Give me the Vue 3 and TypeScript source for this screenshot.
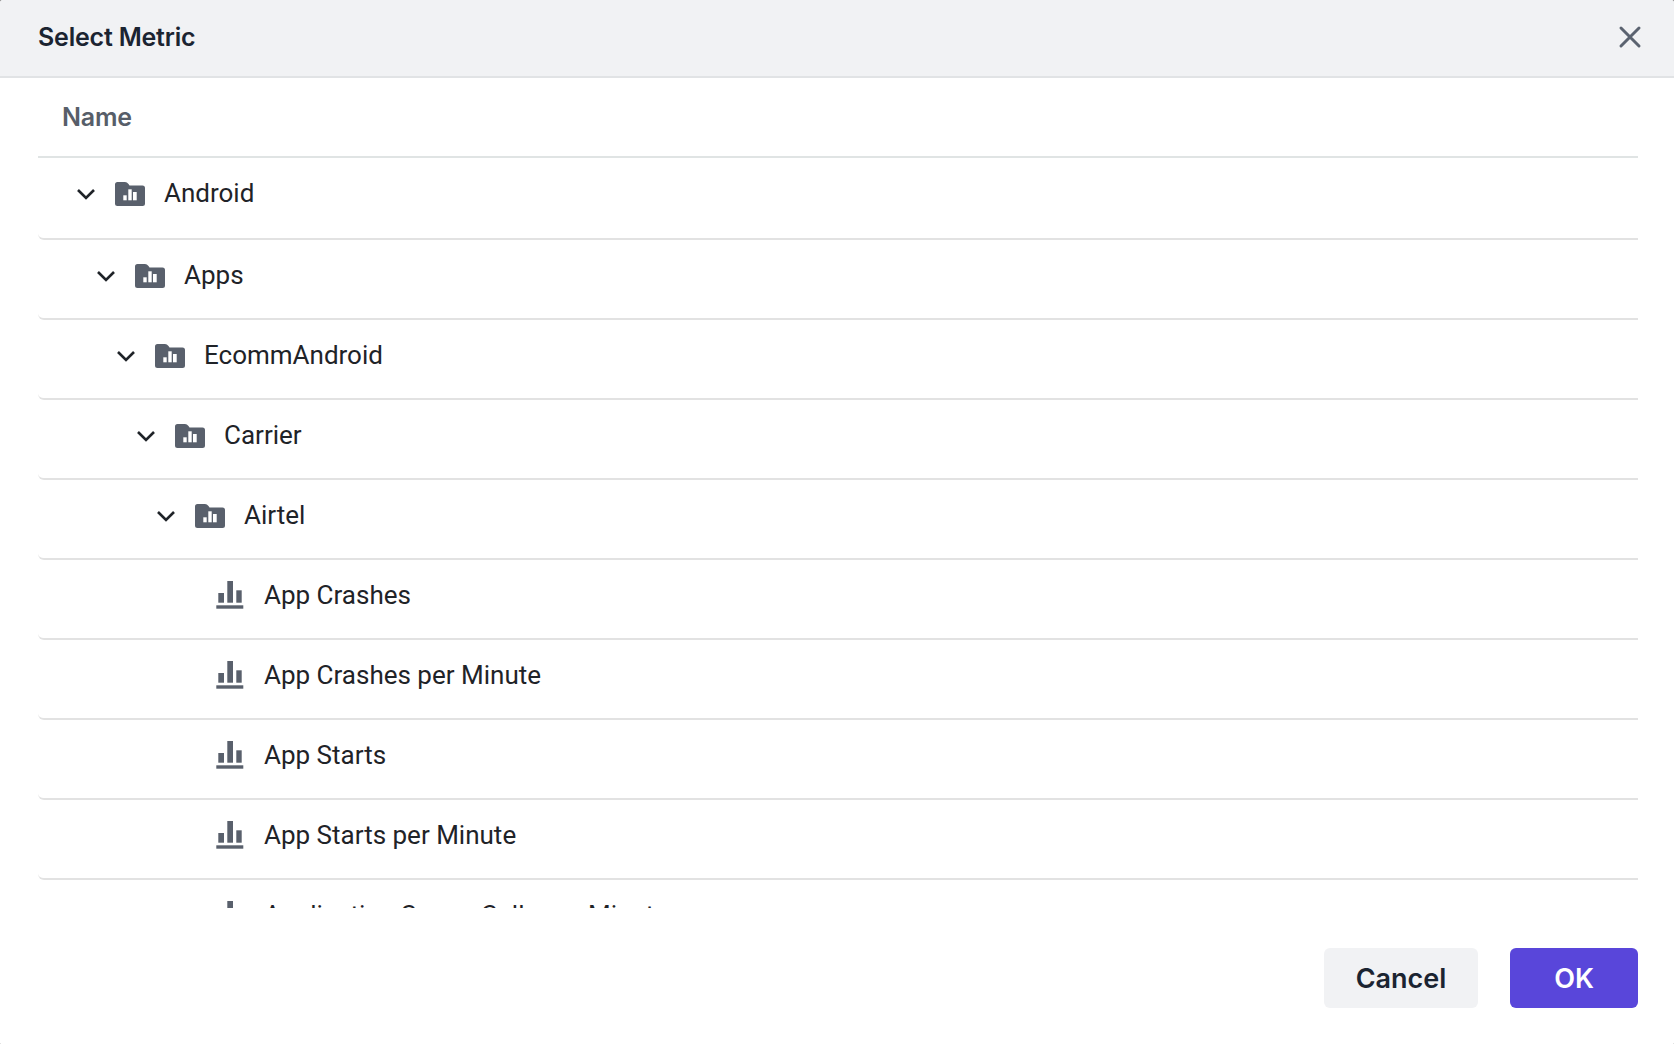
<script setup lang="ts">
interface Row {
  name: string
  level: number
  folder: boolean
}

const rows: Row[] = [
  { name: 'Android', level: 0, folder: true },
  { name: 'Apps', level: 1, folder: true },
  { name: 'EcommAndroid', level: 2, folder: true },
  { name: 'Carrier', level: 3, folder: true },
  { name: 'Airtel', level: 4, folder: true },
  { name: 'App Crashes', level: 5, folder: false },
  { name: 'App Crashes per Minute', level: 5, folder: false },
  { name: 'App Starts', level: 5, folder: false },
  { name: 'App Starts per Minute', level: 5, folder: false },
  { name: 'Application Server Calls per Minute', level: 5, folder: false },
]
</script>

<template>
  <div class="dialog">
    <header class="head">
      <h2 class="title">Select Metric</h2>
      <button class="close" aria-label="Close">
        <svg width="24" height="24" viewBox="0 0 24 24">
          <path d="M3 3 L21 21 M21 3 L3 21" fill="none" stroke="#5b6370" stroke-width="3" stroke-linecap="round" />
        </svg>
      </button>
    </header>
    <div class="body">
      <div class="colhead">Name</div>
      <div class="list">
        <div
          v-for="(r, i) in rows"
          :key="r.name"
          class="row"
          :class="{ top: i === 0 }"
          :style="{ paddingLeft: 38 + r.level * 20 + 'px' }"
        >
          <template v-if="r.folder">
            <svg class="chev" width="20" height="12" viewBox="0 0 20 12">
              <path d="M2 2 L10 10 L18 2" fill="none" stroke="#1f2328" stroke-width="2.6" />
            </svg>
            <svg class="folder" width="30" height="24" viewBox="0 0 30 24">
              <path d="M0 2.5 A2.5 2.5 0 0 1 2.5 0 H10 Q12 0 13.5 2 L14.5 3.5 H27.5 A2.5 2.5 0 0 1 30 6 V21.5 A2.5 2.5 0 0 1 27.5 24 H2.5 A2.5 2.5 0 0 1 0 21.5 Z" fill="#59606c" />
              <rect x="8.3" y="13.3" width="3.4" height="5" fill="#fff" />
              <rect x="13.3" y="7.3" width="3.4" height="11" fill="#fff" />
              <rect x="18" y="10" width="3.7" height="8.3" fill="#fff" />
            </svg>
          </template>
          <svg v-else class="leaf" width="28" height="28" viewBox="0 0 28 28">
            <rect x="2.3" y="12" width="5.7" height="9.7" fill="#59606c" />
            <rect x="11.3" y="0" width="5.7" height="21.7" fill="#59606c" />
            <rect x="20.3" y="9.3" width="5.4" height="12.4" fill="#59606c" />
            <rect x="0.3" y="24.3" width="27" height="3.4" fill="#59606c" />
          </svg>
          <span class="label" :class="{ 'label-leaf': !r.folder }">{{ r.name }}</span>
        </div>
      </div>
    </div>
    <footer class="foot">
      <button class="btn cancel">Cancel</button>
      <button class="btn ok">OK</button>
    </footer>
  </div>
</template>

<style>
html, body { margin: 0; background: #8a8a8a; }
</style>

<style scoped>
.dialog {
  width: 1674px;
  height: 1044px;
  display: flex;
  flex-direction: column;
  background: #fff;
  overflow: hidden;
  border-radius: 3px 3px 1px 1px;
  font-family: Inter, "Liberation Sans", sans-serif;
}
.head {
  flex: none;
  display: flex;
  align-items: center;
  justify-content: space-between;
  padding: 0 32px 2px 38px;
  height: 74px;
  background: #f1f2f4;
  border-bottom: 2px solid #e1e3e5;
}
.title {
  margin: 0;
  font-size: 25px;
  font-weight: 600;
  color: #1b2431;
  letter-spacing: -0.2px;
}
.close {
  display: flex;
  padding: 0;
  border: 0;
  background: none;
}
.body {
  flex: none;
  padding: 0 36px 0 38px;
  display: flex;
  flex-direction: column;
}
.colhead {
  flex: none;
  height: 80px;
  box-sizing: border-box;
  padding: 0 0 0 24px;
  display: flex;
  align-items: center;
  border-bottom: 2px solid #e0e4e4;
  font-size: 25px;
  font-weight: 600;
  color: #575e69;
  letter-spacing: -0.2px;
}
.list {
  height: 750px;
  overflow: hidden;
  flex: none;
}
.row {
  height: 80px;
  box-sizing: border-box;
  padding-bottom: 8px;
  display: flex;
  align-items: center;
  border-bottom: 2px solid #e2e2e2;
  border-bottom-left-radius: 6px;
  font-family: Roboto, "Liberation Sans", sans-serif;
  font-size: 26px;
  color: #1f2328;
}
.row.top {
  height: 82px;
  padding-bottom: 10px;
}
.chev {
  flex: none;
  margin-top: 2px;
}
.folder {
  flex: none;
  margin-left: 19px;
  margin-top: 2px;
}
.leaf {
  flex: none;
  margin-left: 40px;
}
.label {
  margin-left: 19px;
  white-space: nowrap;
}
.label-leaf {
  margin-left: 20px;
}
.foot {
  flex: 1;
  display: flex;
  justify-content: flex-end;
  align-items: flex-start;
  gap: 32px;
  padding: 40px 36px 0 0;
}
.btn {
  height: 60px;
  border: 0;
  border-radius: 6px;
  font-family: Inter, "Liberation Sans", sans-serif;
  font-size: 27px;
  font-weight: 600;
  padding: 0;
}
.cancel {
  width: 154px;
  background: #f1f2f4;
  color: #1b2431;
}
.ok {
  width: 128px;
  background: #5946da;
  color: #fff;
}
</style>
